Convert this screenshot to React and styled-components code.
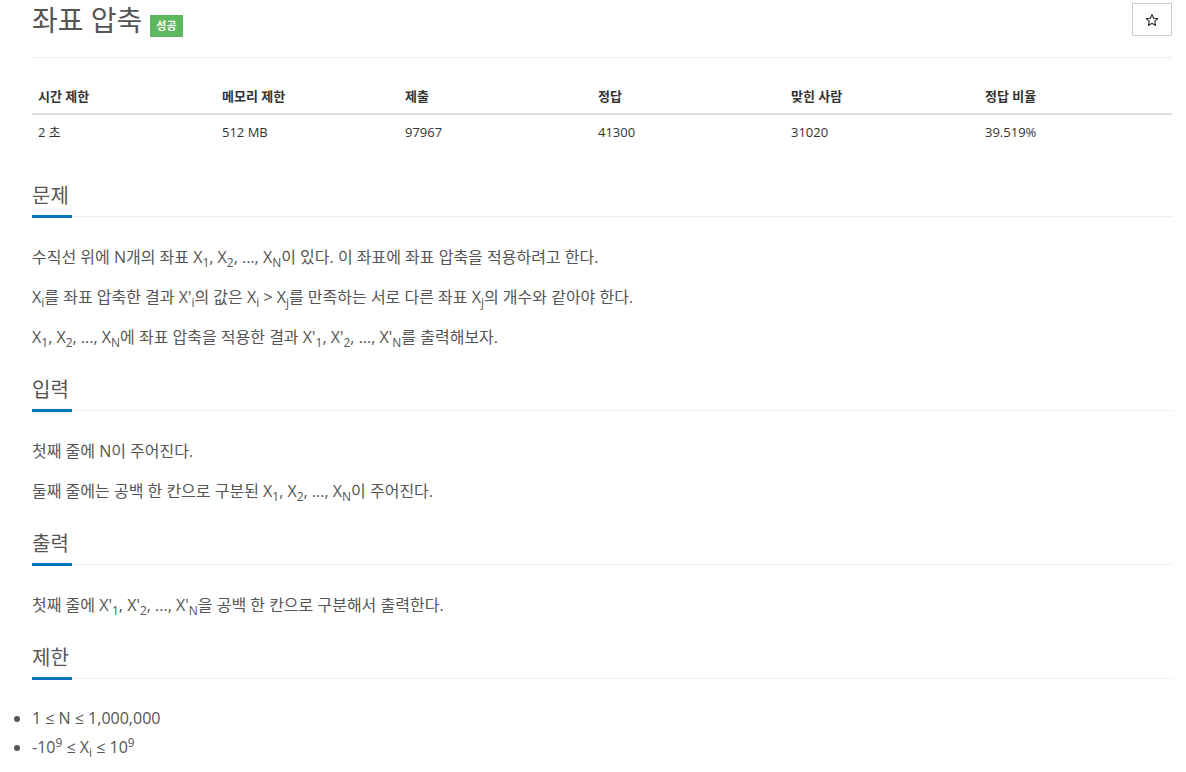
import React from "react";
import styled, { createGlobalStyle } from "styled-components";

const Global = createGlobalStyle`
  html, body { margin: 0; padding: 0; background: #fff; }
  body {
    font-family: "Open Sans", "Noto Sans CJK KR", sans-serif;
    font-size: 14px;
    color: #555;
  }
  * { box-sizing: border-box; }
`;

const Page = styled.div`
  padding: 0 14px 0 32px;
  width: 1186px;
`;

const Header = styled.div`
  display: flex;
  justify-content: space-between;
  align-items: flex-start;
  padding-top: 3px;
  height: 58px;
  border-bottom: 1px solid #eee;
`;

const Title = styled.h1`
  margin: 0;
  font-size: 28px;
  font-weight: 400;
  line-height: 34px;
  color: #555;
  display: flex;
  align-items: center;
  gap: 8px;
`;

const Badge = styled.span`
  display: inline-flex;
  align-items: center;
  justify-content: center;
  height: 22px;
  padding: 0 6px;
  margin-top: 12px;
  background: #5cb85c;
  color: #fff;
  font-size: 11px;
  font-weight: 700;
`;

const StarButton = styled.button`
  width: 40px;
  height: 33px;
  border: 1px solid #ccc;
  background: #fff;
  color: #333;
  padding: 0;
  display: flex;
  align-items: center;
  justify-content: center;
`;

const Table = styled.table`
  width: 1140px;
  margin-top: 21px;
  margin-bottom: 33px;
  border-collapse: collapse;
  table-layout: fixed;
  font-size: 13px;
  color: #333;
`;

const Th = styled.th`
  text-align: left;
  font-weight: 700;
  padding: 8px 6px;
  line-height: 18px;
  border-bottom: 2px solid #ddd;
`;

const Td = styled.td`
  padding: 8px 6px;
  line-height: 18px;
`;

const Section = styled.section`
  margin-top: ${(p) => (p.$first ? "0" : "27px")};
`;

const HeadlineWrap = styled.div`
  display: flex;
  border-bottom: 1px dotted #ddd;
`;

const Headline = styled.h2`
  margin: 0 0 -2px 0;
  font-size: 20px;
  font-weight: 400;
  line-height: 28px;
  color: #555;
  padding-bottom: 5px;
  border-bottom: 3px solid #0076c0;
  min-width: 40px;
`;

const Content = styled.div`
  padding-top: 28px;
`;

const P = styled.p`
  margin: 0 0 16px 0;
  line-height: 24px;
  font-size: 16px;
  color: #555;
  &:last-child { margin-bottom: 16px; }
`;

const Sub = styled.sub`
  font-size: 75%;
  line-height: 0;
  vertical-align: -0.3em;
`;

const Sup = styled.sup`
  font-size: 75%;
  line-height: 0;
  vertical-align: 0.5em;
`;

const List = styled.ul`
  margin: -3px 0 0 0;
  padding: 0;
`;

const Item = styled.li`
  font-size: 16px;
  line-height: 29px;
  color: #555;
`;

const StarIcon = () => (
  <svg width="14" height="14" viewBox="0 0 24 24" fill="none" stroke="#333" strokeWidth="2" strokeLinejoin="round">
    <path d="M12 2.5l2.9 6.6 7.1.6-5.4 4.7 1.6 7-6.2-3.7-6.2 3.7 1.6-7L2 9.7l7.1-.6z" />
  </svg>
);

const X = ({ s, prime }) => (
  <>
    X{prime ? "'" : ""}
    <Sub>{s}</Sub>
  </>
);

const SectionBlock = ({ title, first, children }) => (
  <Section $first={first}>
    <HeadlineWrap>
      <Headline>{title}</Headline>
    </HeadlineWrap>
    <Content>{children}</Content>
  </Section>
);

const stats = [
  ["시간 제한", "2 초", 184],
  ["메모리 제한", "512 MB", 183],
  ["제출", "97967", 193],
  ["정답", "41300", 193],
  ["맞힌 사람", "31020", 194],
  ["정답 비율", "39.519%", 193],
];

export default function App() {
  return (
    <>
      <Global />
      <Page>
        <Header>
          <Title>
            좌표 압축
            <Badge>성공</Badge>
          </Title>
          <StarButton aria-label="star">
            <StarIcon />
          </StarButton>
        </Header>
        <Table>
          <colgroup>
            {stats.map(([h, , w]) => (
              <col key={h} style={{ width: w }} />
            ))}
          </colgroup>
          <thead>
            <tr>
              {stats.map(([h]) => (
                <Th key={h}>{h}</Th>
              ))}
            </tr>
          </thead>
          <tbody>
            <tr>
              {stats.map(([h, v]) => (
                <Td key={h}>{v}</Td>
              ))}
            </tr>
          </tbody>
        </Table>

        <SectionBlock title="문제" first>
          <P>
            수직선 위에 N개의 좌표 <X s="1" />, <X s="2" />, ..., <X s="N" />이 있다. 이 좌표에 좌표 압축을 적용하려고 한다.
          </P>
          <P>
            <X s="i" />를 좌표 압축한 결과 <X s="i" prime />의 값은 <X s="i" /> &gt; <X s="j" />를 만족하는 서로 다른 좌표 <X s="j" />의 개수와 같아야 한다.
          </P>
          <P>
            <X s="1" />, <X s="2" />, ..., <X s="N" />에 좌표 압축을 적용한 결과 <X s="1" prime />, <X s="2" prime />, ..., <X s="N" prime />를 출력해보자.
          </P>
        </SectionBlock>

        <SectionBlock title="입력">
          <P>첫째 줄에 N이 주어진다.</P>
          <P>
            둘째 줄에는 공백 한 칸으로 구분된 <X s="1" />, <X s="2" />, ..., <X s="N" />이 주어진다.
          </P>
        </SectionBlock>

        <SectionBlock title="출력">
          <P>
            첫째 줄에 <X s="1" prime />, <X s="2" prime />, ..., <X s="N" prime />을 공백 한 칸으로 구분해서 출력한다.
          </P>
        </SectionBlock>

        <SectionBlock title="제한">
          <List>
            <Item>1 ≤ N ≤ 1,000,000</Item>
            <Item>
              -10<Sup>9</Sup> ≤ <X s="i" /> ≤ 10<Sup>9</Sup>
            </Item>
          </List>
        </SectionBlock>
      </Page>
    </>
  );
}
